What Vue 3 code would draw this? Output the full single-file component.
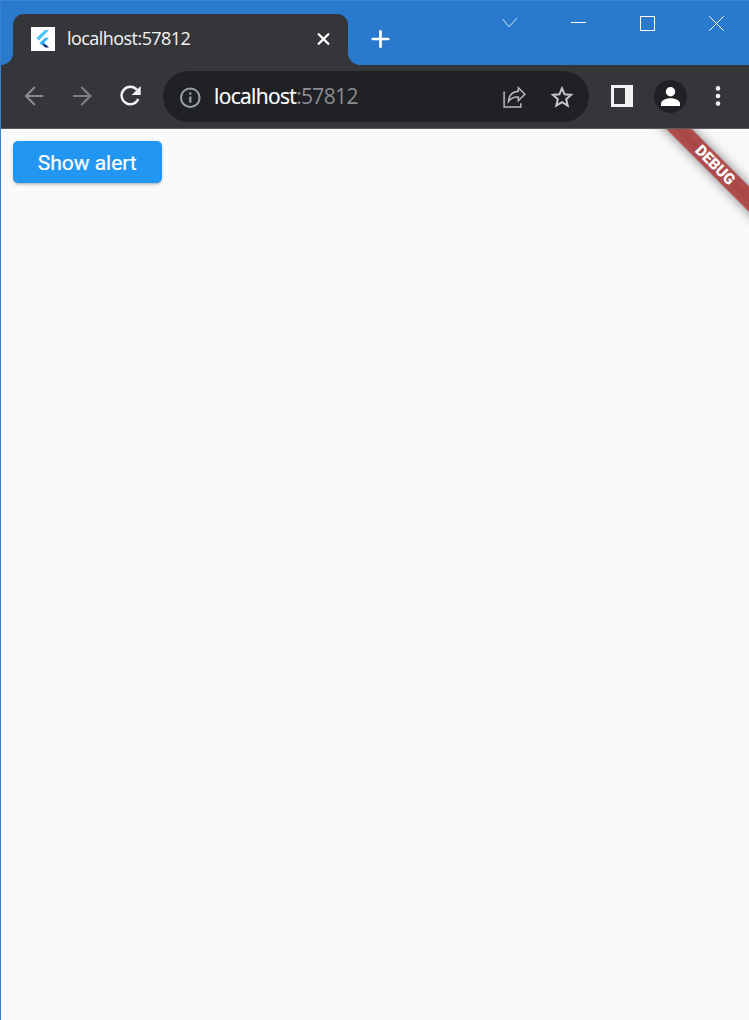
<script setup>
const host = 'localhost'
const port = ':57812'
</script>

<template>
  <div class="window">
    <header class="tabstrip">
      <div class="tab">
        <i class="foot left"></i>
        <svg class="favicon" width="24" height="24" viewBox="0 0 24 24">
          <rect width="24" height="24" fill="#fff" />
          <path d="M14 3H18L8 13.500L5.300 11Z" fill="#47c5fb" />
          <path d="M14 10.800H18L13 16L10.500 18L8.500 16Z" fill="#35b4f4" />
          <path d="M10.500 18L13 15.700L15.500 18.300H12Z" fill="#1272c4" />
          <path d="M12 18H15.500L18 20.500H14Z" fill="#0b2c73" />
        </svg>
        <span class="title">{{ host }}{{ port }}</span>
        <svg class="close" width="14" height="14" viewBox="0 0 14 14">
          <path d="M2.700 2.200L12.300 11.800M12.300 2.200L2.700 11.800" stroke="#fff" stroke-width="2.300" stroke-linecap="round" />
        </svg>
        <i class="foot right"></i>
      </div>
      <svg class="plus" width="20" height="20" viewBox="0 0 20 20">
        <path d="M10.500 2.300V17.700M2.800 10H18.200" stroke="#fff" stroke-width="2.700" stroke-linecap="round" />
      </svg>
      <div class="controls">
        <svg width="16" height="16" viewBox="0 0 16 16"><path d="M.7 4.200L7 11.800L15 3.200" class="thin faint" /></svg>
        <svg width="16" height="16" viewBox="0 0 16 16"><path d="M0 7.500H15" class="thin" /></svg>
        <svg width="16" height="16" viewBox="0 0 16 16"><rect x=".5" y="1.500" width="14" height="14" class="thin" /></svg>
        <svg width="16" height="16" viewBox="0 0 16 16"><path d="M.3 1.300L14.700 15.700M14.700 1.300L.3 15.700" class="thin" /></svg>
      </div>
    </header>

    <nav class="toolbar">
      <svg class="back" width="24" height="24" viewBox="0 0 24 24">
        <path d="M21.300 12H4.500M13 3L4 12L13 21" fill="none" stroke="#88898c" stroke-width="2.200" />
      </svg>
      <svg class="forward" width="24" height="24" viewBox="0 0 24 24">
        <path d="M2 12H18.800M10.300 3L19.300 12L10.300 21" fill="none" stroke="#7f8083" stroke-width="2.200" />
      </svg>
      <svg class="reload" width="24" height="24" viewBox="0 0 24 24">
        <path d="M18.900 5.800A8.700 8.700 0 1 0 20.300 15" fill="none" stroke="#f1f2f3" stroke-width="2.400" />
        <path d="M22.700 2V11H13.700Z" fill="#f1f2f3" />
      </svg>
      <div class="omnibox">
        <svg class="info" width="22" height="22" viewBox="0 0 22 22">
          <circle cx="11.300" cy="10.700" r="9.300" fill="none" stroke="#9aa0a6" stroke-width="2" />
          <path d="M11.300 9.500V15.700M11.300 5.600V7.800" stroke="#9aa0a6" stroke-width="2.200" />
        </svg>
        <span class="url">{{ host }}<span class="port">{{ port }}</span></span>
        <svg class="share" width="24" height="24" viewBox="0 0 24 24">
          <path d="M2.100 6.500V22H18.800V18.200" fill="none" stroke="#b8b9bb" stroke-width="1.500" />
          <path d="M16.300 2.700L22.900 9.200L16.300 15.700V12.100C12.100 11.800 8.900 13.200 6.500 16.500C6.800 11 10.100 6.900 16.300 6.300Z" fill="none" stroke="#b8b9bb" stroke-width="1.500" />
        </svg>
        <svg class="star" width="24" height="24" viewBox="0 0 24 24">
          <path d="M12 3.300L14.600 9.300L21.100 9.900L16.200 14.200L17.700 20.600L12 17.200L6.300 20.600L7.800 14.200L2.900 9.900L9.400 9.300Z" fill="none" stroke="#c6c7c9" stroke-width="2" />
        </svg>
      </div>
      <svg class="panel" width="22" height="22" viewBox="0 0 22 22">
        <path d="M0 0H22V22H0ZM3 3V19H14V3Z" fill="#f1f2f3" fill-rule="evenodd" />
      </svg>
      <svg class="avatar" width="33" height="33" viewBox="0 0 33 33">
        <circle cx="16.500" cy="16.500" r="16.500" fill="#202124" />
        <circle cx="16.500" cy="11.800" r="4.700" fill="#fff" />
        <path d="M7 26V23.500C7 20 13 18.300 16.500 18.300S26 20 26 23.500V26Z" fill="#fff" />
      </svg>
      <svg class="more" width="6" height="20" viewBox="0 0 6 20">
        <circle cx="3" cy="2.400" r="2.300" fill="#f1f2f3" />
        <circle cx="3" cy="10" r="2.300" fill="#f1f2f3" />
        <circle cx="3" cy="17.600" r="2.300" fill="#f1f2f3" />
      </svg>
    </nav>

    <main class="page">
      <button class="alert">Show alert</button>
      <div class="banner"><span>DEBUG</span></div>
    </main>
  </div>
</template>

<style>
body { background: #fafafa; }
</style>

<style scoped>
.window {
  width: 749px;
  height: 1020px;
  box-sizing: border-box;
  display: flex;
  flex-direction: column;
  border-left: 1px solid #3a80d2;
  overflow: hidden;
  background: #fafafa;
  font-family: "Open Sans", "Noto Sans", sans-serif;
}
svg { display: block; flex: none; }
.tabstrip {
  height: 65px;
  flex: none;
  box-sizing: border-box;
  border-top: 1px solid #3b86d0;
  background: #2979cc;
  display: flex;
  align-items: flex-start;
}
.tab {
  position: relative;
  margin: 13px 0 0 12px;
  width: 335px;
  height: 51px;
  box-sizing: border-box;
  padding-left: 18px;
  background: #35363a;
  border-radius: 11px 11px 0 0;
  display: flex;
  align-items: center;
}
.favicon { margin-bottom: 1px; }
.foot { position: absolute; bottom: 0; width: 12px; height: 12px; }
.foot.left { left: -12px; background: radial-gradient(circle at 0 0, transparent 11.500px, #35363a 12.300px); }
.foot.right { right: -12px; background: radial-gradient(circle at 100% 0, transparent 11.500px, #35363a 12.300px); }
.title {
  margin-left: 12px;
  margin-bottom: 4px;
  width: 249px;
  font-size: 18px;
  letter-spacing: -0.55px;
  line-height: 24px;
  color: #f4f4f5;
  white-space: nowrap;
}
.close { margin-bottom: 1px; }
.plus { margin: 28px 0 0 22px; }
.controls { margin: 14px 24px 0 auto; display: flex; gap: 53px; }
.thin { fill: none; stroke: #fff; stroke-width: 1; }
.faint { opacity: .8; }
.toolbar {
  height: 64px;
  flex: none;
  box-sizing: border-box;
  border-bottom: 1px solid #5b5c60;
  background: #35363a;
  display: flex;
  align-items: center;
}
.back { margin-left: 21px; margin-bottom: 2px; }
.forward { margin-left: 25px; margin-bottom: 2px; }
.reload { margin-left: 23px; margin-bottom: 1px; }
.omnibox {
  margin-left: 21px;
  width: 426px;
  height: 51px;
  border-radius: 26px;
  background: #202124;
  display: flex;
  align-items: center;
}
.info { margin-left: 16px; margin-top: 2px; }
.url { margin-left: 13px; margin-bottom: 1px; width: 288px; font-size: 21px; letter-spacing: -0.65px; line-height: 28px; color: #fff; -webkit-text-stroke: 0.2px #fff; white-space: nowrap; }
.port { color: #8a8c8f; -webkit-text-stroke: 0; }
.star { margin-left: 24px; }
.panel { margin-left: 22px; margin-bottom: 1px; }
.avatar { margin-left: 21px; }
.more { margin-left: 28px; margin-bottom: 1px; }
.page { position: relative; flex: 1; overflow: hidden; padding: 12px; }
.alert {
  display: block;
  width: 148.500px;
  height: 42px;
  padding: 2px 0 0;
  border: 0;
  border-radius: 5px;
  background: #2196f3;
  color: #fff;
  font: 400 21px/40px Roboto, sans-serif;
  letter-spacing: -0.03px;
  -webkit-text-stroke: 0.2px #fff;
  box-shadow: 0 3px 2px -2px rgba(0, 0, 0, .16), 0 2px 3px rgba(0, 0, 0, .1), 0 1px 5px rgba(0, 0, 0, .08);
}
.banner {
  position: absolute;
  left: 594px;
  top: 26.500px;
  width: 240px;
  height: 18px;
  transform: rotate(45deg);
  background: linear-gradient(#b15050, #a84646 50%, #b15050);
  box-shadow: 0 0 12px rgba(0, 0, 0, .5);
  color: #fff;
  font: 900 15.300px/18px Roboto, sans-serif;
  text-align: center;
}
</style>
